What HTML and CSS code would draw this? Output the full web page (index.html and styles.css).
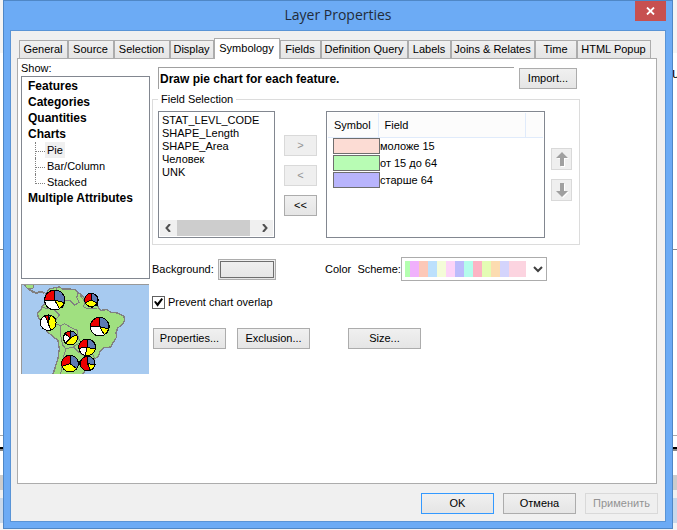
FILE: index.html
```html
<!DOCTYPE html>
<html lang="en">
<head>
<meta charset="utf-8">
<title>Layer Properties</title>
<link rel="stylesheet" href="styles.css">
</head>
<body>
<span class="behind">u</span>
<main class="window">
  <header class="titlebar">
    <h1>Layer Properties</h1>
    <button class="close" aria-label="Close"><svg width="9" height="8" viewBox="0 0 9 8"><path d="M1 .5 8 7.5M8 .5 1 7.5" stroke="#fff" stroke-width="1.8"/></svg></button>
  </header>
  <div class="client">
    <div class="tabs" role="tablist">
      <button role="tab">General</button>
      <button role="tab">Source</button>
      <button role="tab">Selection</button>
      <button role="tab">Display</button>
      <button role="tab" class="active" aria-selected="true">Symbology</button>
      <button role="tab">Fields</button>
      <button role="tab">Definition Query</button>
      <button role="tab">Labels</button>
      <button role="tab">Joins &amp; Relates</button>
      <button role="tab">Time</button>
      <button role="tab">HTML Popup</button>
    </div>
    <section class="panel" role="tabpanel">
      <aside class="side">
        <div class="show">Show:</div>
        <ul class="tree">
          <li>Features</li>
          <li>Categories</li>
          <li>Quantities</li>
          <li>Charts
            <ul>
              <li><span class="chosen">Pie</span></li>
              <li><span>Bar/Column</span></li>
              <li><span>Stacked</span></li>
            </ul>
          </li>
          <li>Multiple Attributes</li>
        </ul>
        <svg class="map" viewBox="33 27 384 270" shape-rendering="crispEdges">
          <path fill="#a7caf0" d="M33 27h384v270H33z"/>
          <path fill="#a0e080" stroke="#808080" stroke-width="3" d="M42 28 52 40 62 42 70 38 72 28z"/>
          <path fill="none" stroke="#808080" stroke-width="6" d="M56 42 68 50 80 54 92 50 104 54"/>
          <path fill="#a0e080" stroke="#808080" stroke-width="4" d="M108 56 118 42 134 38 148 36 158 42 178 42 196 44 204 52 214 60 222 68 240 72 258 80 266 98 272 106 290 104 304 112 322 114 342 124 344 136 336 150 324 158 318 172 320 186 310 202 302 216 282 218 270 228 266 242 250 256 236 270 228 284 216 300H128L136 276 144 250 148 222 144 196 128 184 112 170 100 146 86 130 82 116 92 104 102 88 106 72z"/>
          <g fill="none" stroke="#808080" stroke-width="3">
            <path d="M94 94 108 100 124 98 136 108 148 120 136 136 134 146 152 152 164 146 184 158 202 166 204 184 212 202 232 212 246 234 254 250"/>
            <path d="M152 152 152 180 158 210 168 222 162 240 158 264 152 296M168 222 188 216 206 206M136 108 144 96 160 94 164 76 182 78 194 90 208 82 200 68 204 54M222 68 224 84 220 94 232 102 260 100M190 216 204 230 218 240 234 250 226 262"/>
            <path d="M142 38 136 50 148 62 162 72M240 74 244 100M210 60 222 76"/>
          </g>
          <path fill="#000" d="M148 88h10v10h-10zM258 88h6v6h-6zM292 150h8v8h-8zM110 158h6v8h-6zM206 258h6v12h-6zM242 94h6v6h-6z"/>
          <g stroke="#000" stroke-width="3">
            <g transform="translate(134 75)"><circle r="30" fill="#fff"/><path fill="#e00" d="M0 0V-30A30 30 0 0 0-30 0z"/><path fill="#5c7ab4" d="M0 0V-30A30 30 0 0 1 29 8z"/><path fill="#ff0" d="M0 0 29 8A30 30 0 0 1 14 26z"/></g>
            <g transform="translate(244 75)"><circle r="20" fill="#ff0"/><path fill="#e00" d="M0 0V-20A20 20 0 0 0-18 9z"/><path fill="#5c7ab4" d="M0 0V-20A20 20 0 0 1 18 9z"/></g>
            <g transform="translate(114 143)"><circle r="23" fill="#fff"/><path fill="#ff0" d="M0 0 8-22A23 23 0 0 1 8 22z"/><path fill="#5c7ab4" d="M0 0V-23L8-22z"/><path fill="#e00" d="M0 0V-23A23 23 0 0 0-9-21z"/></g>
            <g transform="translate(269 155)"><circle r="28" fill="#fff"/><path fill="#e00" d="M0 0V-28A28 28 0 0 0-28 0z"/><path fill="#5c7ab4" d="M0 0V-28A28 28 0 0 1 27 7z"/><path fill="#ff0" d="M0 0 27 7A28 28 0 0 1 14 24z"/></g>
            <g transform="translate(181 189)"><circle r="21" fill="#ff0"/><path fill="#fff" d="M0 0-16-13A21 21 0 0 0-14 15z"/><path fill="#e00" d="M0 0V-21A21 21 0 0 0-16-13z"/><path fill="#5c7ab4" d="M0 0V-21A21 21 0 0 1 18-10z"/></g>
            <g transform="translate(231 217)"><circle r="25" fill="#fff"/><path fill="#e00" d="M0 0V-25A25 25 0 0 0-25 3z"/><path fill="#5c7ab4" d="M0 0V-25A25 25 0 0 1 25 5z"/><path fill="#ff0" d="M0 0 25 5A25 25 0 0 1-5 24z"/></g>
            <g transform="translate(180 266)"><circle r="25" fill="#ff0"/><path fill="#e00" d="M0 0V-25A25 25 0 0 0-24 8z"/><path fill="#5c7ab4" d="M0 0V-25A25 25 0 0 1 20 15z"/></g>
            <g transform="translate(233 266)"><circle r="22" fill="#e00"/><path fill="#5c7ab4" d="M0 0V-22A22 22 0 0 1 22 3z"/><path fill="#ff0" d="M0 0 22 3A22 22 0 0 1 8 20z"/></g>
          </g>
          <path fill="#999" d="M33 27h384v2H33zM33 27h2v270h-2z"/>
        </svg>
      </aside>
      <div class="main">
        <div class="top">
          <strong class="message">Draw pie chart for each feature.</strong>
          <button class="btn">Import...</button>
        </div>
        <fieldset class="group">
          <legend>Field Selection</legend>
          <div class="listbox">
            <select size="8" aria-label="Available fields">
              <option>STAT_LEVL_CODE</option>
              <option>SHAPE_Length</option>
              <option>SHAPE_Area</option>
              <option>Человек</option>
              <option>UNK</option>
            </select>
            <div class="scroll">
              <button aria-label="Scroll left"><svg width="6" height="8" viewBox="0 0 6 8"><path d="M5 0 1.5 4 5 8" fill="none" stroke="#505050" stroke-width="2"/></svg></button>
              <div class="thumb"></div>
              <button aria-label="Scroll right"><svg width="6" height="8" viewBox="0 0 6 8"><path d="M1 0 4.500 4 1 8" fill="none" stroke="#505050" stroke-width="2"/></svg></button>
            </div>
          </div>
          <div class="movers">
            <button class="btn" disabled>&gt;</button>
            <button class="btn" disabled>&lt;</button>
            <button class="btn">&lt;&lt;</button>
          </div>
          <div class="chosen-fields">
            <table>
              <thead><tr><th class="col-symbol">Symbol</th><th class="col-field">Field</th><th></th></tr></thead>
              <tbody>
                <tr><td><i class="swatch rose"></i></td><td colspan="2">моложе 15</td></tr>
                <tr><td><i class="swatch green"></i></td><td colspan="2">от 15 до 64</td></tr>
                <tr><td><i class="swatch violet"></i></td><td colspan="2">старше 64</td></tr>
              </tbody>
            </table>
          </div>
          <div class="order">
            <button class="btn" disabled aria-label="Move up"><svg width="14" height="16" viewBox="0 0 14 16"><path fill="#fff" d="M8 2 14 8H10V16H6V8H2z"/><path fill="#a0a0a0" d="M7 1 13 7H9V15H5V7H1z"/></svg></button>
            <button class="btn" disabled aria-label="Move down"><svg width="14" height="16" viewBox="0 0 14 16"><path fill="#fff" d="M8 16 14 10H10V2H6V10H2z"/><path fill="#a0a0a0" d="M7 15 13 9H9V1H5V9H1z"/></svg></button>
          </div>
        </fieldset>
        <div class="colors">
          <label for="background">Background:</label>
          <button id="background" class="btn color"><i></i></button>
          <label class="scheme-label" for="scheme">Color&nbsp; Scheme:</label>
          <div class="scheme">
            <select id="scheme"><option></option></select>
            <svg width="10" height="7" viewBox="0 0 10 7"><path d="M1 1 5 5 9 1" fill="none" stroke="#404040" stroke-width="2"/></svg>
          </div>
        </div>
        <label class="check"><input type="checkbox" checked>Prevent chart overlap</label>
        <div class="actions">
          <button class="btn">Properties...</button>
          <button class="btn">Exclusion...</button>
          <button class="btn size">Size...</button>
        </div>
      </div>
    </section>
    <footer class="footer">
      <button class="btn default">OK</button>
      <button class="btn">Отмена</button>
      <button class="btn" disabled>Применить</button>
    </footer>
  </div>
</main>
</body>
</html>
```
FILE: styles.css
```css
* { box-sizing: border-box; }

body {
  margin: 0;
  padding: 0 4px 1px 3px;
  min-height: 100vh;
  display: flex;
  background: linear-gradient(#f4f4f4 0 53px, #fff 53px 249px, #888 249px 250px, #fff 250px 435px, #aaa 435px 436px, #fff 436px 447px, #000 447px 449px, #888 449px 451px, #fff 451px 475px, #ccc 475px 490px, #f0f0f0 490px 498px, #c8d8ea 498px 523px, #f4f4f4 523px);
  font: 11px/13px "Liberation Sans", Arial, sans-serif;
  color: #000;
}

button, select, input { font: inherit; color: inherit; margin: 0; }
ul { list-style: none; margin: 0; padding: 0; }
svg { display: block; }

.behind {
  position: absolute;
  right: 0;
  top: 64px;
  width: 5px;
  overflow: hidden;
  font-size: 14px;
  line-height: 18px;
}

.window {
  position: relative;
  flex: 1;
  display: flex;
  flex-direction: column;
  border: 1px solid #4f87c6;
  background: #6cabf5;
  padding: 0 6px 6px;
}

.titlebar {
  position: relative;
  height: 29px;
  text-align: center;
}

.titlebar h1 {
  margin: 0;
  padding-top: 4px;
  font: 14px/20px "Open Sans", "Noto Sans", sans-serif;
  color: #222c3a;
}

.close {
  position: absolute;
  top: 0;
  right: 0;
  width: 31px;
  height: 20px;
  padding: 0;
  border: 0;
  background: #c75050;
  display: grid;
  place-items: center;
}

.client {
  flex: 1;
  display: flex;
  flex-direction: column;
  padding: 7px 8px 7px 6px;
  border: 1px solid #5a94d6;
  background: #f0f0f0;
}

.tabs {
  display: grid;
  grid-template-columns: 49px 46px 56px 44px 66px 41px 87px 43px 84px 42px 74px;
  align-items: end;
  height: 21px;
  padding-left: 2px;
  margin-bottom: -1px;
  z-index: 1;
}

.tabs button {
  height: 18px;
  margin-bottom: 1px;
  padding: 0 1px 0 0;
  border: 1px solid #acacac;
  border-bottom: 0;
  background: linear-gradient(#f0f0f0, #e5e5e5);
  white-space: nowrap;
}

.tabs .active {
  height: 21px;
  margin-bottom: 0;
  padding-bottom: 2px;
  background: #fff;
}

.panel {
  flex: 1;
  display: flex;
  gap: 2px;
  padding: 3px 3px 10px;
  border: 1px solid #acacac;
  background: #fff;
}

.side { width: 129px; }
.show { height: 14px; }

.tree {
  height: 203px;
  padding: 1px 6px;
  border: 1px solid #828790;
  font-weight: bold;
  font-size: 12px;
  line-height: 16px;
}

.tree ul { padding-left: 7px; font-weight: normal; font-size: 11px; }

.tree ul li { position: relative; padding-left: 10px; height: 16px; }

.tree ul li::before {
  content: "";
  position: absolute;
  left: 0;
  top: 0;
  width: 9px;
  height: 9px;
  border-left: 1px dotted #808080;
  border-bottom: 1px dotted #808080;
}

.tree ul li:not(:last-child)::after {
  content: "";
  position: absolute;
  left: 0;
  top: 9px;
  height: 7px;
  border-left: 1px dotted #808080;
}

.tree span { display: inline-block; padding: 0 2px; }
.tree .chosen { background: #f0f0f0; }

.map { width: 128px; height: 90px; margin-top: 5px; }

.main { flex: 1; padding-top: 5px; }

.top { display: flex; gap: 5px; padding-left: 6px; }

.message {
  width: 356px;
  height: 22px;
  padding-left: 1px;
  border: solid #a0a0a0;
  border-width: 1px 0 0 1px;
  font-size: 12px;
  line-height: 22px;
}

.btn {
  height: 21px;
  padding: 0;
  border: 1px solid #acacac;
  background: linear-gradient(#f0f0f0, #e5e5e5);
}

.btn:disabled { color: #939393; background: #efefef; border-color: #d9d9d9; }

.top .btn { width: 58px; margin-top: 1px; }

.group {
  display: flex;
  width: 428px;
  margin: 4px 0 0;
  padding: 5px 5px 6px;
  border: 1px solid #dcdcdc;
}

.group legend { padding: 0 3px; }

.listbox {
  width: 117px;
  height: 127px;
  padding: 1px;
  border: 1px solid #828790;
}

.listbox select {
  display: block;
  width: 100%;
  height: 107px;
  padding: 1px 0;
  border: 0;
  outline: 0;
  overflow: hidden;
  background: #fff;
}

.listbox option { min-height: 13px; padding: 0 2px; line-height: 13px; }

.scroll { display: flex; height: 16px; background: #f0f0f0; }
.scroll button { width: 17px; padding: 0; border: 0; background: none; display: grid; place-items: center; }
.thumb { width: 74px; margin-right: 6px; background: #cdcdcd; }

.movers { display: flex; flex-direction: column; gap: 9px; padding: 24px 9px 0; }
.movers .btn { width: 33px; }

.chosen-fields {
  width: 219px;
  height: 127px;
  padding: 1px;
  border: 1px solid #828790;
}

table { width: 100%; border-collapse: collapse; table-layout: fixed; }
th { height: 24px; padding: 2px 0 0 6px; border-right: 1px solid #e0ebfb; border-bottom: 1px solid #e0ebfb; background: #fcfcfc; text-align: left; font-weight: normal; }
th:last-child { border-right: 0; }
.col-symbol { width: 50px; }
.col-field { width: 147px; }
td { height: 17px; padding: 0; white-space: nowrap; }
td + td { padding-left: 2px; }

.swatch { display: block; width: 47px; height: 16px; margin: 0 0 1px 5px; border: 1px solid #6e6e6e; }
.rose { background: #fcdcd4; }
.green { background: #b8fcb4; }
.violet { background: #b8b4fc; }

.order { display: flex; flex-direction: column; gap: 9px; padding: 37px 0 0 6px; }
.order .btn { width: 21px; height: 22px; display: grid; place-items: center; }

.colors { display: flex; align-items: center; margin-top: 12px; }
.colors > label:first-child { width: 66px; }

.color { width: 58px; padding: 1px; }
.color i { display: block; height: 17px; border: 1px solid #6e6e6e; }

.scheme-label { width: 76px; margin-left: 49px; }

.scheme { position: relative; width: 146px; height: 24px; }

.scheme select {
  appearance: none;
  display: block;
  width: 100%;
  height: 100%;
  border: 1px solid #acacac;
  border-radius: 0;
  background: linear-gradient(90deg, #b4ffb0 0 5px, #f0b0fc 5px 14px, #fcc8b8 14px 23px, #bce0fc 23px 32px, #f4fcd8 32px 41px, #fcd4f8 41px 50px, #bcbcfc 50px 59px, #b4fcec 59px 68px, #fcb4c4 68px 77px, #e4fcb4 77px 86px, #fcdcb0 86px 95px, #d4d4fc 95px 104px, #fcd4e0 104px) 3px 3px / 121px 16px no-repeat #fff;
}

.scheme svg { position: absolute; right: 4px; top: 9px; pointer-events: none; }

.check { display: flex; align-items: center; gap: 3px; margin-top: 15px; }

.check input {
  appearance: none;
  width: 13px;
  height: 13px;
  border: 1px solid #606060;
  display: grid;
  place-items: center;
}

.check input::before {
  content: "";
  width: 9px;
  height: 9px;
  background: #000;
  clip-path: polygon(0 42%, 18% 32%, 38% 56%, 84% 0, 100% 14%, 40% 96%);
}

.actions { display: flex; gap: 11px; margin-top: 19px; padding-left: 1px; }
.actions .btn { width: 73px; }
.actions .size { margin-left: 27px; }

.footer { display: flex; justify-content: flex-end; gap: 9px; padding-top: 9px; margin-right: -1px; }
.footer .btn { width: 73px; }
.footer .default { border-color: #3399ff; }
```
